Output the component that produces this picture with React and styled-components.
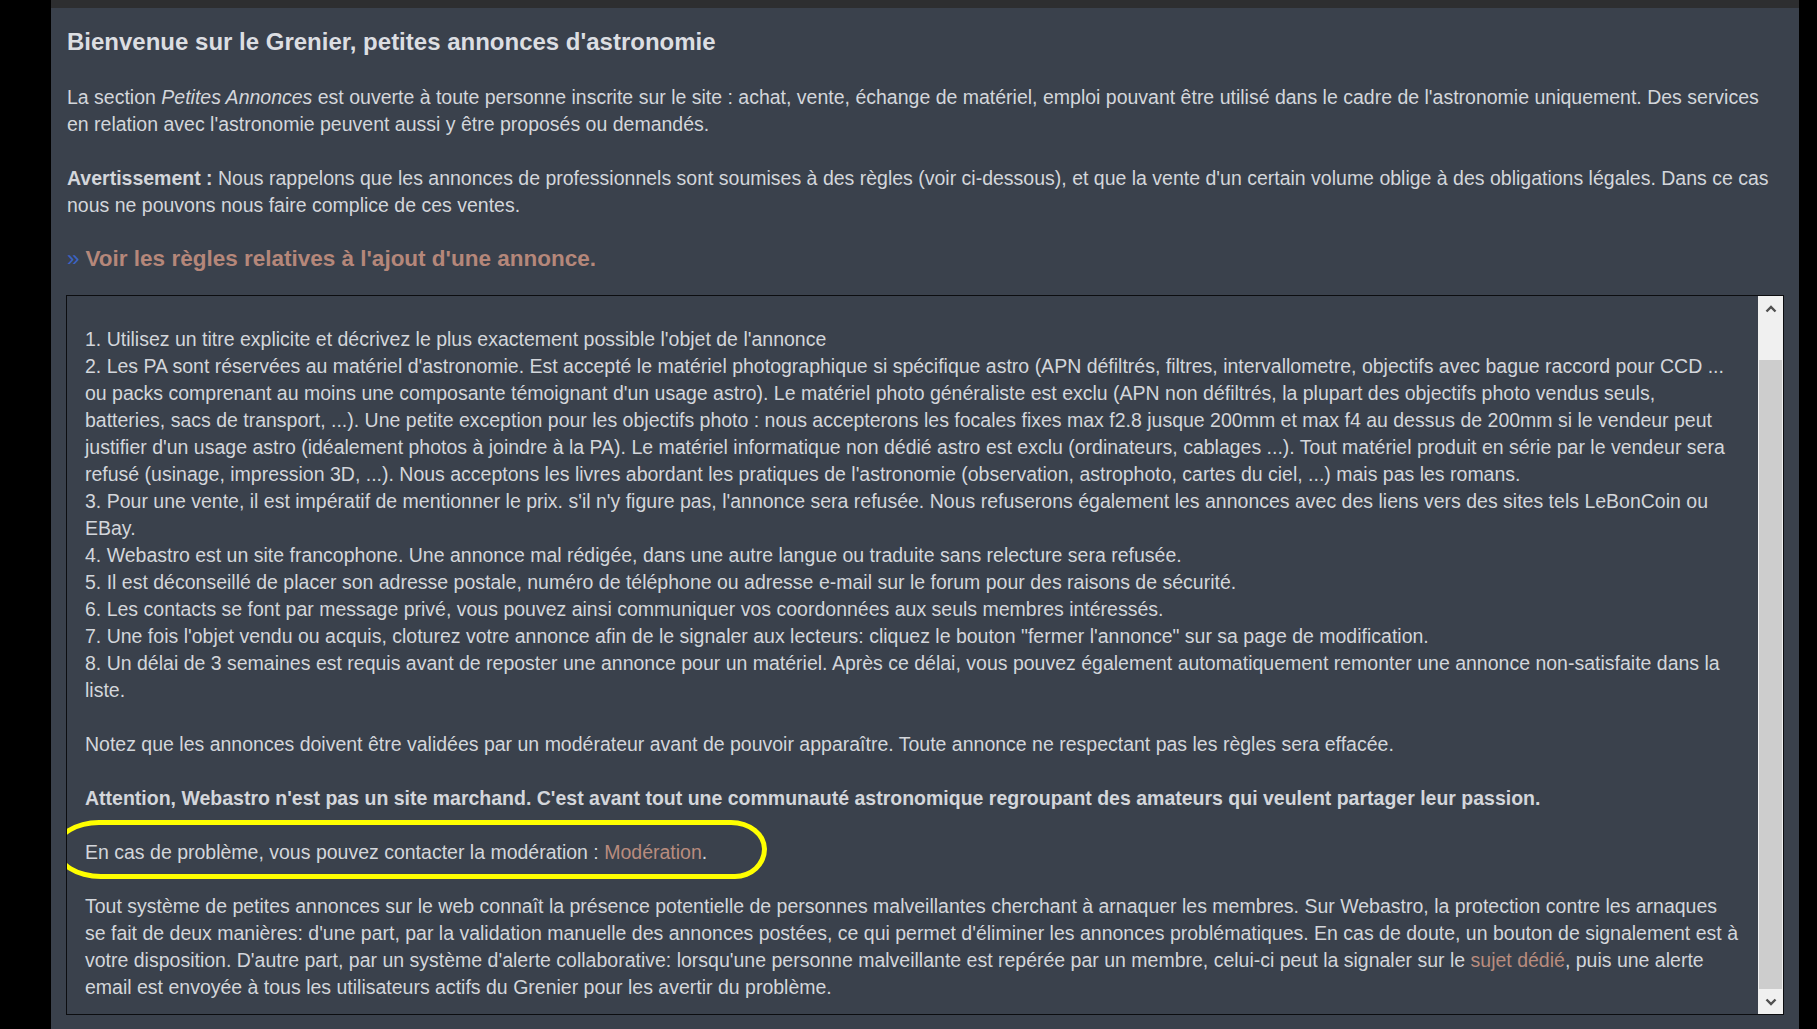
import React from 'react';
import styled, { createGlobalStyle } from 'styled-components';

const GlobalStyle = createGlobalStyle`
  html, body {
    margin: 0;
    padding: 0;
    background: #000;
  }
  body {
    font-family: "Liberation Sans", Arial, sans-serif;
    color: #d3d6db;
  }
`;

const Page = styled.div`
  display: flex;
  min-height: 100vh;
`;

const Panel = styled.main`
  margin-left: 51px;
  width: 1748px;
  box-sizing: border-box;
  border-top: 8px solid #2d2e30;
  background: #3a414c;
  padding: 20px 16px 0 15px;
`;

const Title = styled.h2`
  margin: 0 0 28px 1px;
  font-size: 24px;
  line-height: 28px;
  font-weight: bold;
  color: #dcdee2;
`;

const Para = styled.p`
  margin: 0 0 ${(p) => p.$gap || 27}px 1px;
  font-size: 19.5px;
  line-height: 27px;
`;

const RulesLink = styled.a`
  display: block;
  margin: 0 0 23px 1px;
  font-size: 22.5px;
  line-height: 27px;
  font-weight: bold;
  color: #b5877a;
  text-decoration: none;

  &::before {
    content: '»';
    color: #3b63c4;
    font-weight: normal;
    margin-right: 6px;
  }
`;

const RulesBox = styled.div`
  display: flex;
  width: 1718px;
  height: 720px;
  box-sizing: border-box;
  border: 1px solid #0c0d10;
`;

const RulesText = styled.div`
  flex: 1;
  overflow: hidden;
  padding: 30px 19px 0 18px;
  font-size: 19.5px;
  line-height: 27px;
`;

const Line = styled.div`
  margin-bottom: ${(p) => (p.$blank ? 27 : 0)}px;
  font-weight: ${(p) => (p.$bold ? 'bold' : 'normal')};
`;

const InlineLink = styled.a`
  color: #b98c7e;
  text-decoration: none;
`;

const Circled = styled.span`
  position: relative;
  display: inline-block;

  &::after {
    content: '';
    position: absolute;
    left: -30px;
    top: -19px;
    width: 712px;
    height: 59px;
    box-sizing: border-box;
    border: 5px solid #ffff00;
    border-radius: 44px 36px 32px 46px / 28px 29px 30px 30px;
    pointer-events: none;
  }
`;

const Scrollbar = styled.div`
  display: flex;
  flex-direction: column;
  width: 25px;
  background: #f0f0f0;
`;

const ScrollButton = styled.div`
  display: flex;
  align-items: center;
  justify-content: center;
  height: 25px;
  color: #505050;
`;

const Track = styled.div`
  flex: 1;
  display: flex;
  flex-direction: column;
  padding: 39px 1px 0;
`;

const Thumb = styled.div`
  flex: 1;
  background: #cdcdcd;
`;

const Chevron = ({ up }) => (
  <svg width="12" height="8" viewBox="0 0 12 8">
    <path
      d={up ? 'M1.5 6.5 L6 2 L10.5 6.5' : 'M1.5 1.5 L6 6 L10.5 1.5'}
      fill="none"
      stroke="currentColor"
      strokeWidth="2.4"
    />
  </svg>
);

const rules = [
  "1. Utilisez un titre explicite et décrivez le plus exactement possible l'objet de l'annonce",
  "2. Les PA sont réservées au matériel d'astronomie. Est accepté le matériel photographique si spécifique astro (APN défiltrés, filtres, intervallometre, objectifs avec bague raccord pour CCD ... ou packs comprenant au moins une composante témoignant d'un usage astro). Le matériel photo généraliste est exclu (APN non défiltrés, la plupart des objectifs photo vendus seuls, batteries, sacs de transport, ...). Une petite exception pour les objectifs photo : nous accepterons les focales fixes max f2.8 jusque 200mm et max f4 au dessus de 200mm si le vendeur peut justifier d'un usage astro (idéalement photos à joindre à la PA). Le matériel informatique non dédié astro est exclu (ordinateurs, cablages ...). Tout matériel produit en série par le vendeur sera refusé (usinage, impression 3D, ...). Nous acceptons les livres abordant les pratiques de l'astronomie (observation, astrophoto, cartes du ciel, ...) mais pas les romans.",
  "3. Pour une vente, il est impératif de mentionner le prix. s'il n'y figure pas, l'annonce sera refusée. Nous refuserons également les annonces avec des liens vers des sites tels LeBonCoin ou EBay.",
  '4. Webastro est un site francophone. Une annonce mal rédigée, dans une autre langue ou traduite sans relecture sera refusée.',
  '5. Il est déconseillé de placer son adresse postale, numéro de téléphone ou adresse e-mail sur le forum pour des raisons de sécurité.',
  '6. Les contacts se font par message privé, vous pouvez ainsi communiquer vos coordonnées aux seuls membres intéressés.',
  '7. Une fois l\'objet vendu ou acquis, cloturez votre annonce afin de le signaler aux lecteurs: cliquez le bouton "fermer l\'annonce" sur sa page de modification.',
  '8. Un délai de 3 semaines est requis avant de reposter une annonce pour un matériel. Après ce délai, vous pouvez également automatiquement remonter une annonce non-satisfaite dans la liste.',
];

const App = () => {
  return (
    <>
      <GlobalStyle />
      <Page>
        <Panel>
          <Title>Bienvenue sur le Grenier, petites annonces d'astronomie</Title>
          <Para>
            La section <i>Petites Annonces</i> est ouverte à toute personne inscrite sur le site : achat, vente,
            échange de matériel, emploi pouvant être utilisé dans le cadre de l'astronomie uniquement. Des services
            en relation avec l'astronomie peuvent aussi y être proposés ou demandés.
          </Para>
          <Para $gap={26}>
            <b>Avertissement :</b> Nous rappelons que les annonces de professionnels sont soumises à des règles
            (voir ci-dessous), et que la vente d'un certain volume oblige à des obligations légales. Dans ce cas
            nous ne pouvons nous faire complice de ces ventes.
          </Para>
          <RulesLink href="#">Voir les règles relatives à l'ajout d'une annonce.</RulesLink>

          <RulesBox>
            <RulesText>
              {rules.map((r, i) => (
                <Line key={i} $blank={i === rules.length - 1}>
                  {r}
                </Line>
              ))}
              <Line $blank>
                Notez que les annonces doivent être validées par un modérateur avant de pouvoir apparaître. Toute
                annonce ne respectant pas les règles sera effacée.
              </Line>
              <Line $blank $bold>
                Attention, Webastro n'est pas un site marchand. C'est avant tout une communauté astronomique
                regroupant des amateurs qui veulent partager leur passion.
              </Line>
              <Line $blank>
                <Circled>
                  En cas de problème, vous pouvez contacter la modération : <InlineLink href="#">Modération</InlineLink>.
                </Circled>
              </Line>
              <Line>
                Tout système de petites annonces sur le web connaît la présence potentielle de personnes malveillantes
                cherchant à arnaquer les membres. Sur Webastro, la protection contre les arnaques se fait de deux
                manières: d'une part, par la validation manuelle des annonces postées, ce qui permet d'éliminer les
                annonces problématiques. En cas de doute, un bouton de signalement est à votre disposition. D'autre
                part, par un système d'alerte collaborative: lorsqu'une personne malveillante est repérée par un
                membre, celui-ci peut la signaler sur le <InlineLink href="#">sujet dédié</InlineLink>, puis une alerte
                email est envoyée à tous les utilisateurs actifs du Grenier pour les avertir du problème.
              </Line>
            </RulesText>
            <Scrollbar>
              <ScrollButton>
                <Chevron up />
              </ScrollButton>
              <Track>
                <Thumb />
              </Track>
              <ScrollButton>
                <Chevron />
              </ScrollButton>
            </Scrollbar>
          </RulesBox>
        </Panel>
      </Page>
    </>
  );
};

export default App;
